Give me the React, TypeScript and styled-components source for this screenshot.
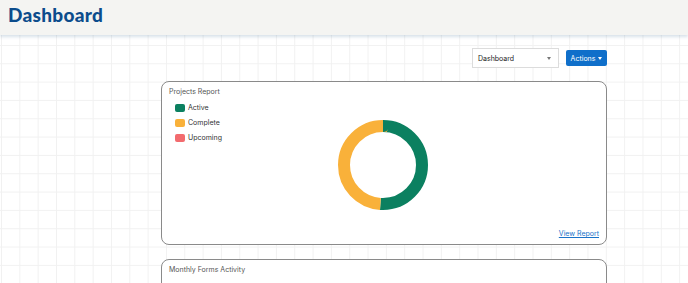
import styled, { createGlobalStyle } from "styled-components";

const GlobalStyle = createGlobalStyle`
  html, body {
    margin: 0;
    padding: 0;
  }
  body {
    font-family: Inter, "Open Sans", sans-serif;
    background-color: #ffffff;
    background-image:
      linear-gradient(to right, #f1f1f1 1px, transparent 1px),
      linear-gradient(to bottom, #f1f1f1 1px, transparent 1px);
    background-size: 18.33px 18.33px;
    background-position: 1px 8.3px;
    min-height: 100vh;
  }
`;

const legend = [
  { label: "Active", color: "#0b8060", value: 51 },
  { label: "Complete", color: "#f9b13a", value: 49 },
  { label: "Upcoming", color: "#f26b6e", value: 0 },
];

const Donut: React.FC = () => {
  const r = 39;
  const c = 2 * Math.PI * r;
  const total = legend.reduce((s, l) => s + l.value, 0);
  let offset = 0;
  return (
    <svg width="96" height="96" viewBox="0 0 96 96">
      <g transform="rotate(-90 48 48)">
        {legend
          .filter(l => l.value > 0)
          .map(l => {
            const len = (l.value / total) * c;
            const el = (
              <circle
                key={l.label}
                cx="48"
                cy="48"
                r={r}
                fill="none"
                stroke={l.color}
                strokeWidth="12"
                strokeDasharray={`${len} ${c - len}`}
                strokeDashoffset={-offset}
              />
            );
            offset += len;
            return el;
          })}
      </g>
    </svg>
  );
};

const App: React.FC = () => {
  return (
    <>
      <GlobalStyle />
      <Header>
        <Title>Dashboard</Title>
      </Header>
      <Main>
        <Toolbar>
          <Select>
            <span>Dashboard</span>
            <Caret color="#777" />
          </Select>
          <ActionButton>
            Actions
            <Caret color="#fff" />
          </ActionButton>
        </Toolbar>
        <Card $height={164}>
          <CardTitle>Projects Report</CardTitle>
          <Legend>
            {legend.map(l => (
              <LegendItem key={l.label}>
                <Swatch $color={l.color} />
                {l.label}
              </LegendItem>
            ))}
          </Legend>
          <ChartArea>
            <Donut />
          </ChartArea>
          <Footer>
            <ReportLink href="#">View Report</ReportLink>
          </Footer>
        </Card>
        <Card $height={60}>
          <CardTitle>Monthly Forms Activity</CardTitle>
        </Card>
      </Main>
    </>
  );
};

const Header = styled.header`
  height: 35px;
  box-sizing: border-box;
  background: #f4f4f2;
  box-shadow: 0 2px 3px rgba(40, 90, 140, 0.18);
  display: flex;
  align-items: center;
  padding: 0 0 7px 8px;
`;

const Title = styled.h1`
  margin: 0;
  font-family: Lato, sans-serif;
  font-weight: 900;
  font-size: 19px;
  color: #0c4c8c;
  letter-spacing: 0.3px;
`;

const Main = styled.main`
  padding: 13px 81px 0 161px;
  display: flex;
  flex-direction: column;
  gap: 14px;
`;

const Toolbar = styled.div`
  display: flex;
  justify-content: flex-end;
  align-items: center;
  gap: 7px;
  margin-bottom: -1px;
`;

const Caret = styled.span<{ color: string }>`
  width: 0;
  height: 0;
  border-left: 2.5px solid transparent;
  border-right: 2.5px solid transparent;
  border-top: 3px solid ${p => p.color};
`;

const Select = styled.div`
  width: 87px;
  height: 20px;
  box-sizing: border-box;
  border: 1px solid #dcdcdc;
  background: #fff;
  display: flex;
  align-items: center;
  justify-content: space-between;
  padding: 0 7px 0 5px;
  font-size: 7px;
  color: #222;
`;

const ActionButton = styled.button`
  width: 41px;
  height: 16px;
  border: none;
  border-radius: 2px;
  background: #0f6fca;
  color: #fff;
  font-family: Inter, sans-serif;
  font-size: 7px;
  display: flex;
  align-items: center;
  justify-content: center;
  gap: 3px;
  padding: 0;
`;

const Card = styled.section<{ $height: number }>`
  position: relative;
  width: 446px;
  height: ${p => p.$height}px;
  box-sizing: border-box;
  border: 1px solid #8a8a8a;
  border-radius: 8px;
  background: #fff;
  padding: 5px 7px 0 7px;
  display: flex;
  flex-direction: column;
`;

const CardTitle = styled.div`
  font-size: 7px;
  color: #555;
`;

const Legend = styled.div`
  display: flex;
  flex-direction: column;
  gap: 6px;
  margin: 7px 0 0 6px;
`;

const LegendItem = styled.div`
  display: flex;
  align-items: center;
  gap: 3px;
  font-size: 7px;
  color: #333;
  height: 9px;
`;

const Swatch = styled.span<{ $color: string }>`
  width: 10px;
  height: 8px;
  border-radius: 2px;
  background: ${p => p.$color};
`;

const ChartArea = styled.div`
  position: absolute;
  left: 173px;
  top: 35px;
`;

const Footer = styled.div`
  margin-top: auto;
  display: flex;
  justify-content: flex-end;
  padding-bottom: 6px;
`;

const ReportLink = styled.a`
  font-size: 7px;
  color: #1a73c8;
  text-decoration: underline;
`;

export default App;
